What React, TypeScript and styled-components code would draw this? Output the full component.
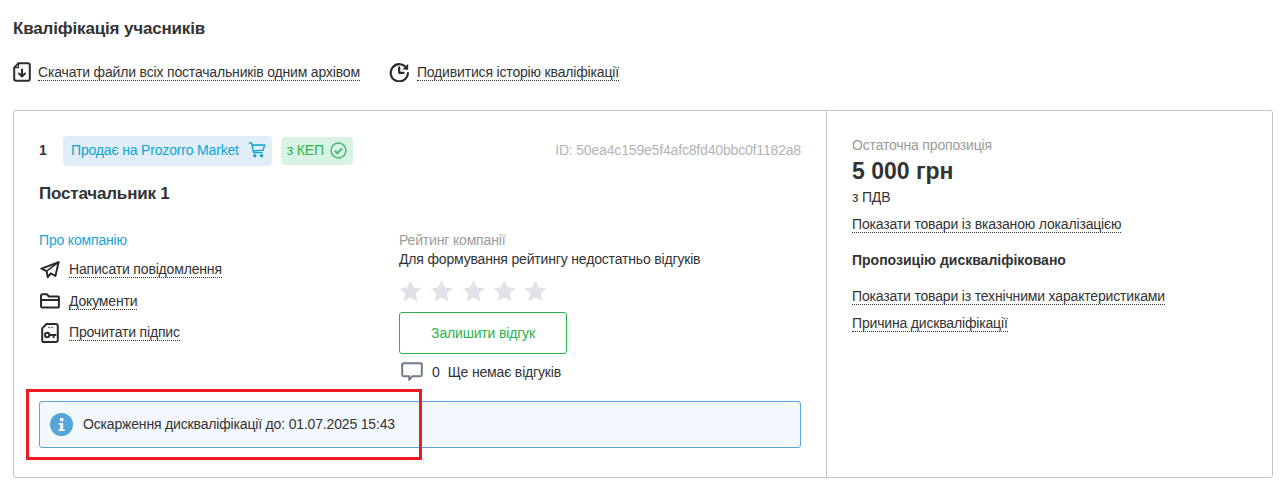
import React from 'react'
import styled, { createGlobalStyle } from 'styled-components'

const GlobalStyle = createGlobalStyle`
  html, body {
    margin: 0;
    padding: 0;
    background: #fff;
    font-family: 'Liberation Sans', Arial, sans-serif;
    font-size: 14px;
    letter-spacing: -0.17px;
    color: #333;
  }
`

const Page = styled.div`
  position: relative;
  width: 1280px;
  height: 494px;
  padding: 20px 7px 0 13px;
  box-sizing: border-box;
  overflow: hidden;
`

const Title = styled.h2`
  margin: 0;
  font-size: 17px;
  line-height: 18px;
  font-weight: 700;
  letter-spacing: -0.16px;
  color: #333;
`

const Toolbar = styled.div`
  display: flex;
  align-items: center;
  gap: 29px;
  margin-top: 23px;
  height: 22px;
`

const ToolItem = styled.div`
  display: flex;
  align-items: center;
  gap: 7px;
`

const DottedLink = styled.a`
  display: inline-block;
  font-size: 14px;
  line-height: 16px;
  color: #333;
  border-bottom: 1px dotted #333;
  white-space: nowrap;
  cursor: pointer;
`

const Card = styled.div`
  display: flex;
  margin-top: 27px;
  height: 368px;
  box-sizing: border-box;
  border: 1px solid #c4c4c4;
  border-radius: 3px;
`

const MainColumn = styled.div`
  width: 813px;
  box-sizing: border-box;
  padding: 25px 25px 0;
  border-right: 1px solid #c4c4c4;
`

const SideColumn = styled.div`
  flex: 1;
  padding: 26px 25px 0;
`

const TagRow = styled.div`
  display: flex;
  align-items: center;
  height: 30px;
`

const Num = styled.span`
  width: 24px;
  margin-bottom: 2px;
  font-weight: 700;
  font-size: 14px;
`

const Tag = styled.div<{ $tone: 'blue' | 'green' }>`
  display: flex;
  align-items: center;
  box-sizing: border-box;
  border-radius: 4px;
  height: ${({ $tone }) => ($tone === 'blue' ? '30px' : '28px')};
  padding: ${({ $tone }) => ($tone === 'blue' ? '0 6px 2px 8px' : '0 6px 2px')};
  margin-right: 9px;
  gap: ${({ $tone }) => ($tone === 'blue' ? '9px' : '6px')};
  background: ${({ $tone }) => ($tone === 'blue' ? '#e1edf7' : '#d8f3e3')};
  color: ${({ $tone }) => ($tone === 'blue' ? '#0ea5d0' : '#2eb24a')};
  font-size: 14px;
`

const IdText = styled.span`
  margin-left: auto;
  margin-bottom: 2px;
  color: #b4b4b4;
  font-size: 14px;
`

const SupplierName = styled.div`
  margin-top: 19px;
  font-size: 17px;
  line-height: 18px;
  font-weight: 700;
  letter-spacing: -0.18px;
`

const InfoGrid = styled.div`
  display: grid;
  grid-template-columns: 360px 1fr;
  margin-top: 29px;
`

const CompanyLabel = styled.div`
  color: #1ba3d8;
  font-size: 14px;
  line-height: 16px;
  margin-bottom: 9.5px;
`

const ActionRow = styled.div`
  display: flex;
  align-items: center;
  height: 24px;
  margin-top: 7.5px;
  gap: 9px;
`

const IconSlot = styled.span`
  display: flex;
  width: 21px;
  justify-content: center;
  flex: none;
`

const MutedLabel = styled.div`
  color: #9b9b9b;
  font-size: 14px;
  line-height: 16px;
`

const PlainLine = styled.div`
  font-size: 14px;
  line-height: 16px;
  margin-top: 3px;
`

const Stars = styled.div`
  display: flex;
  gap: 10.25px;
  margin-top: 12px;
  margin-left: 1px;
  height: 24px;
`

const OutlineButton = styled.button`
  display: block;
  width: 168px;
  height: 42px;
  margin-top: 9px;
  padding: 0;
  background: #fff;
  border: 1px solid #2bb24c;
  border-radius: 3px;
  color: #2bb24c;
  font-family: inherit;
  font-size: 14px;
  letter-spacing: inherit;
`

const ReviewRow = styled.div`
  display: flex;
  align-items: center;
  margin-top: 7px;
  padding-left: 2px;
  height: 22px;
  font-size: 14px;
`

const ReviewCount = styled.span`
  margin: 0 8px 0 9px;
`

const Alert = styled.div`
  display: flex;
  align-items: center;
  gap: 10px;
  box-sizing: border-box;
  height: 47px;
  margin-top: 18px;
  padding: 0 10px;
  background: #f2f8fe;
  border: 1px solid #5ba4d4;
  border-radius: 3px;
  font-size: 14px;
`

const AlertText = styled.span`
  margin-bottom: 2px;
`

const SideLabel = styled(MutedLabel)`
  margin-bottom: 5px;
`

const Price = styled.div`
  font-size: 23px;
  line-height: 26px;
  font-weight: 700;
  letter-spacing: 0;
`

const Vat = styled.div`
  margin-top: 5px;
  line-height: 16px;
`

const SideLink = styled.div<{ $gap: number }>`
  margin-top: ${({ $gap }) => $gap}px;
  line-height: 0;
`

const StrongLine = styled.div`
  margin-top: 19px;
  font-weight: 700;
  line-height: 16px;
  letter-spacing: 0;
`

// the red box is drawn over the page in the reference
const Highlight = styled.div`
  position: absolute;
  left: 26px;
  top: 389px;
  width: 396px;
  height: 71px;
  box-sizing: border-box;
  border: 3px solid #ed1c24;
  pointer-events: none;
`

const stroke = { fill: 'none', stroke: '#2b2b2b', strokeWidth: 2, strokeLinecap: 'round', strokeLinejoin: 'round' } as const

const DownloadIcon = () => (
  <svg width="18" height="20" viewBox="0 0 18 20">
    <path d="M5.5 1.2H15a1.8 1.8 0 0 1 1.8 1.8v14a1.8 1.8 0 0 1-1.8 1.8H3A1.8 1.8 0 0 1 1.2 17V5.6z" {...stroke} />
    <path d="M5.5 1.2V5.6H1.2" {...stroke} strokeWidth={1.2} />
    <path d="M9 7.5v6.5M6 11.5l3 3 3-3" {...stroke} />
  </svg>
)

const HistoryIcon = () => (
  <svg width="21" height="20" viewBox="0 0 21 20">
    <path d="M17.8 6.6A8.6 8.6 0 1 0 18.9 11" {...stroke} strokeWidth={2.2} />
    <path d="M19.2 1.8v5.8h-5.8z" fill="#2b2b2b" />
    <path d="M10.2 5.4v5.4h4.4" {...stroke} strokeWidth={2.2} />
  </svg>
)

const CartIcon = () => (
  <svg width="18" height="18" viewBox="0 0 18 18" fill="none" stroke="#0ea5d0" strokeWidth="1.4">
    <path d="M1 2h2.6l2 9.6h9" />
    <path d="M4 4h12.6l-1.4 5.2-9.8.8" />
    <circle cx="6.8" cy="14.8" r="1" fill="#0ea5d0" />
    <circle cx="13.6" cy="14.8" r="1" fill="#0ea5d0" />
  </svg>
)

const CheckIcon = () => (
  <svg width="17" height="17" viewBox="0 0 16 16" fill="none" stroke="#45bd6c" strokeWidth="1.4">
    <circle cx="8" cy="8" r="7" />
    <path d="M4.6 8.2l2.4 2.4 4.4-4.6" strokeWidth="2" />
  </svg>
)

const PlaneIcon = () => (
  <svg width="20" height="18" viewBox="0 0 20 18">
    <path d="M18.6 1.2L1.4 7.6l5.2 2.6 1.2 6 3-3.8 4.6 2.6z" {...stroke} />
    <path d="M18.6 1.2L6.6 10.2" {...stroke} strokeWidth={1.6} />
  </svg>
)

const FolderIcon = () => (
  <svg width="20" height="16" viewBox="0 0 20 16">
    <path d="M1 2.8a1.5 1.5 0 0 1 1.5-1.5h4.6l1.8 2.2h8.6A1 1 0 0 1 18.9 4.6v8.8a1.2 1.2 0 0 1-1.2 1.2H2.3A1.3 1.3 0 0 1 1 13.3z" {...stroke} />
    <path d="M1 7h18" {...stroke} />
  </svg>
)

const SignatureIcon = () => (
  <svg width="18" height="20" viewBox="0 0 18 20">
    <path d="M5.5 1H15a1.8 1.8 0 0 1 1.8 1.8v14.4A1.8 1.8 0 0 1 15 19H3a1.8 1.8 0 0 1-1.8-1.8V5.4z" {...stroke} />
    <circle cx="6.2" cy="12" r="2.2" {...stroke} />
    <path d="M8.4 12h6.2M12.6 12v2.2" {...stroke} />
    <path d="M8 4.5h.1M11 4.5h.1" {...stroke} strokeWidth={1.4} />
  </svg>
)

const StarIcon = () => (
  <svg width="21" height="24" viewBox="0 0 22 22">
    <path d="M11 .6l3.3 7 7.4.9-5.5 5 1.5 7.6L11 17.3 4.3 21.1l1.5-7.6L.3 8.5l7.4-.9z" fill="#dfe2e8" stroke="#dfe2e8" strokeWidth="0.8" strokeLinejoin="round" />
  </svg>
)

const CommentIcon = () => (
  <svg width="22" height="20" viewBox="0 0 22 20">
    <path d="M2.6 1.2h16.8a1.4 1.4 0 0 1 1.4 1.4v10.2a1.4 1.4 0 0 1-1.4 1.4h-8l-3.2 3.6v-3.6H2.6a1.4 1.4 0 0 1-1.4-1.4V2.6a1.4 1.4 0 0 1 1.4-1.4z" fill="none" stroke="#6f7b8a" strokeWidth="2" strokeLinejoin="round" />
  </svg>
)

const InfoIcon = () => (
  <svg width="23" height="23" viewBox="0 0 23 23">
    <circle cx="11.5" cy="11.5" r="11.5" fill="#55a5d9" />
    <circle cx="11.7" cy="6.6" r="1.9" fill="#fff" />
    <path d="M8.8 10h4.4v6.2h1.4v1.8H8.6v-1.8h1.6v-4.4H8.8z" fill="#fff" />
  </svg>
)

export default function App() {
  return (
    <Page>
      <GlobalStyle />
      <Title>Кваліфікація учасників</Title>
      <Toolbar>
        <ToolItem>
          <DownloadIcon />
          <DottedLink>Скачати файли всіх постачальників одним архівом</DottedLink>
        </ToolItem>
        <ToolItem>
          <HistoryIcon />
          <DottedLink>Подивитися історію кваліфікації</DottedLink>
        </ToolItem>
      </Toolbar>
      <Card>
        <MainColumn>
          <TagRow>
            <Num>1</Num>
            <Tag $tone="blue">
              Продає на Prozorro Market
              <CartIcon />
            </Tag>
            <Tag $tone="green">
              з КЕП
              <CheckIcon />
            </Tag>
            <IdText>ID: 50ea4c159e5f4afc8fd40bbc0f1182a8</IdText>
          </TagRow>
          <SupplierName>Постачальник 1</SupplierName>
          <InfoGrid>
            <div>
              <CompanyLabel>Про компанію</CompanyLabel>
              <ActionRow>
                <IconSlot>
                  <PlaneIcon />
                </IconSlot>
                <DottedLink>Написати повідомлення</DottedLink>
              </ActionRow>
              <ActionRow>
                <IconSlot>
                  <FolderIcon />
                </IconSlot>
                <DottedLink>Документи</DottedLink>
              </ActionRow>
              <ActionRow>
                <IconSlot>
                  <SignatureIcon />
                </IconSlot>
                <DottedLink>Прочитати підпис</DottedLink>
              </ActionRow>
            </div>
            <div>
              <MutedLabel>Рейтинг компанії</MutedLabel>
              <PlainLine>Для формування рейтингу недостатньо відгуків</PlainLine>
              <Stars>
                <StarIcon />
                <StarIcon />
                <StarIcon />
                <StarIcon />
                <StarIcon />
              </Stars>
              <OutlineButton>Залишити відгук</OutlineButton>
              <ReviewRow>
                <CommentIcon />
                <ReviewCount>0</ReviewCount>
                Ще немає відгуків
              </ReviewRow>
            </div>
          </InfoGrid>
          <Alert>
            <InfoIcon />
            <AlertText>Оскарження дискваліфікації до: 01.07.2025 15:43</AlertText>
          </Alert>
        </MainColumn>
        <SideColumn>
          <SideLabel>Остаточна пропозиція</SideLabel>
          <Price>5 000 грн</Price>
          <Vat>з ПДВ</Vat>
          <SideLink $gap={11}>
            <DottedLink>Показати товари із вказаною локалізацією</DottedLink>
          </SideLink>
          <StrongLine>Пропозицію дискваліфіковано</StrongLine>
          <SideLink $gap={20}>
            <DottedLink>Показати товари із технічними характеристиками</DottedLink>
          </SideLink>
          <SideLink $gap={10}>
            <DottedLink>Причина дискваліфікації</DottedLink>
          </SideLink>
        </SideColumn>
      </Card>
      <Highlight />
    </Page>
  )
}
